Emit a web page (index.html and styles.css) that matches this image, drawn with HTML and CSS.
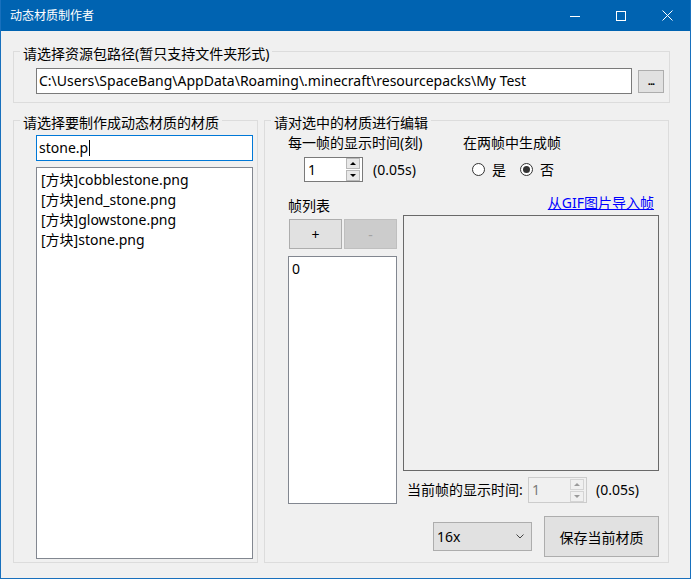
FILE: index.html
```html
<!doctype html>
<html lang="zh-CN">
<head>
	<meta charset="UTF-8">
	<title>动态材质制作者</title>
	<link rel="stylesheet" href="styles.css">
</head>
<body>
	<div class="window">
		<div class="titlebar">
			<span class="title">动态材质制作者</span>
			<div class="caption">
				<span class="cap"><svg width="10" height="10" viewBox="0 0 10 10"><path d="M0 5.5h10" stroke="#fff" stroke-width="1"/></svg></span>
				<span class="cap"><svg width="10" height="10" viewBox="0 0 10 10"><rect x="0.5" y="0.5" width="9" height="9" fill="none" stroke="#fff" stroke-width="1"/></svg></span>
				<span class="cap"><svg width="11" height="11" viewBox="0 0 11 11"><path d="M0.5 0.5l10 10M10.5 0.5l-10 10" stroke="#fff" stroke-width="1"/></svg></span>
			</div>
		</div>

		<div class="client">
			<fieldset class="group group-path">
				<legend>请选择资源包路径(暂只支持文件夹形式)</legend>
				<div class="path-row">
					<div class="textbox path-box">C:\Users\SpaceBang\AppData\Roaming\.minecraft\resourcepacks\My Test</div>
					<button class="btn btn-browse">...</button>
				</div>
			</fieldset>

			<div class="lower">
				<fieldset class="group group-pick">
					<legend>请选择要制作成动态材质的材质</legend>
					<div class="pick-body">
						<div class="textbox search-box focused">stone.p<span class="caret"></span></div>
						<div class="listbox texture-list">
							<div class="item">[方块]cobblestone.png</div>
							<div class="item">[方块]end_stone.png</div>
							<div class="item">[方块]glowstone.png</div>
							<div class="item">[方块]stone.png</div>
						</div>
					</div>
				</fieldset>

				<fieldset class="group group-edit">
					<legend>请对选中的材质进行编辑</legend>
					<div class="edit-body">
						<div class="edit-head">
							<div class="head-time">
								<div class="label">每一帧的显示时间(刻)</div>
								<div class="spin-row">
									<div class="spin">
										<span class="spin-val">1</span>
										<span class="spin-arrows">
											<span class="arrow up"></span>
											<span class="arrow down"></span>
										</span>
									</div>
									<span class="secs">(0.05s)</span>
								</div>
							</div>
							<div class="head-tween">
								<div class="label">在两帧中生成帧</div>
								<div class="radio-row">
									<span class="radio"></span><span class="radio-text">是</span>
									<span class="radio checked"></span><span class="radio-text">否</span>
								</div>
							</div>
						</div>

						<div class="frames">
							<div class="frames-left">
								<div class="label frames-title">帧列表</div>
								<div class="frame-btns">
									<button class="btn btn-small">+</button>
									<button class="btn btn-small disabled">-</button>
								</div>
								<div class="listbox frame-list">
									<div class="item">0</div>
								</div>
							</div>
							<div class="frames-right">
								<div class="gif-link"><a href="#">从GIF图片导入帧</a></div>
								<div class="preview"></div>
								<div class="frame-time">
									<span class="frame-time-label">当前帧的显示时间:</span>
									<div class="spin disabled">
										<span class="spin-val">1</span>
										<span class="spin-arrows">
											<span class="arrow up"></span>
											<span class="arrow down"></span>
										</span>
									</div>
									<span class="secs">(0.05s)</span>
								</div>
								<div class="save-row">
									<div class="combo">
										<span>16x</span>
										<svg width="8" height="5" viewBox="0 0 8 5"><path d="M0.5 0.5l3.5 3.5l3.5-3.5" fill="none" stroke="#444" stroke-width="1"/></svg>
									</div>
									<button class="btn btn-save">保存当前材质</button>
								</div>
							</div>
						</div>
					</div>
				</fieldset>
			</div>
		</div>
	</div>
</body>
</html>
```

FILE: styles.css
```css
html, body {
	margin: 0;
	padding: 0;
	background: #fff;
}

body {
	font-family: "Noto Sans", "Noto Sans CJK SC", sans-serif;
	font-size: 14px;
	color: #000;
}

.window {
	width: 691px;
	height: 579px;
	box-sizing: border-box;
	border: 1px solid #1870bd;
	border-top: 0;
	background: #f0f0f0;
}

/* title bar */
.titlebar {
	height: 31px;
	display: flex;
	align-items: center;
	background: #0063b1;
	color: #fff;
}
.title {
	padding-left: 9px;
	font-size: 12px;
	line-height: 16px;
}
.caption {
	margin-left: auto;
	display: flex;
}
.cap {
	width: 46px;
	height: 31px;
	display: flex;
	align-items: center;
	justify-content: center;
}

/* client */
.client {
	padding: 9px 0 0 12px;
}

.group {
	margin: 0;
	padding: 0;
	min-width: 0;
	box-sizing: border-box;
	border: 1px solid #dcdcdc;
}
.group legend {
	margin-left: 6px;
	padding: 6px 3px 0;
	font-size: 14px;
	line-height: 16px;
}

.textbox {
	box-sizing: border-box;
	background: #fff;
	border: 1px solid #7a7a7a;
	padding-left: 2px;
	line-height: 24px;
	white-space: nowrap;
	overflow: hidden;
}
.textbox.focused {
	border-color: #0078d7;
}
.caret {
	display: inline-block;
	width: 1px;
	height: 16px;
	margin-left: 1px;
	background: #000;
	vertical-align: -3px;
}

.btn {
	box-sizing: border-box;
	margin: 0;
	padding: 0;
	font: inherit;
	color: #000;
	background: #e1e1e1;
	border: 1px solid #adadad;
}
.btn.disabled {
	background: #cccccc;
	border-color: #bfbfbf;
	color: #a3a3a3;
}

.listbox {
	box-sizing: border-box;
	background: #fff;
	border: 1px solid #828790;
	padding: 2px 0 0 4px;
}
.listbox .item {
	line-height: 20px;
	white-space: nowrap;
}

/* path group */
.group-path {
	width: 657px;
}
.path-row {
	display: flex;
	align-items: center;
	gap: 6px;
	padding: 6px 0 8px 22px;
}
.path-box {
	width: 596px;
	height: 26px;
}
.btn-browse {
	width: 26px;
	height: 23px;
	font-size: 11px;
	font-weight: bold;
	line-height: 14px;
	letter-spacing: -1px;
}

/* lower groups */
.lower {
	display: flex;
	gap: 6px;
	margin-top: 6px;
}
.group-pick {
	width: 245px;
	height: 454px;
}
.pick-body {
	padding: 4px 0 0 22px;
}
.search-box {
	width: 217px;
	height: 26px;
}
.texture-list {
	width: 217px;
	height: 392px;
	margin-top: 6px;
}

.group-edit {
	width: 405px;
	height: 454px;
}
.edit-body {
	padding: 4px 9px 0 23px;
}
.label {
	line-height: 16px;
	white-space: nowrap;
}

.edit-head {
	display: flex;
}
.head-time {
	width: 175px;
}
.spin-row {
	display: flex;
	align-items: center;
	margin: 6px 0 0 16px;
}
.spin {
	box-sizing: border-box;
	width: 59px;
	height: 25px;
	display: flex;
	align-items: center;
	background: #fff;
	border: 1px solid #7a7a7a;
}
.spin-val {
	flex: 1;
	padding-left: 3px;
	line-height: 20px;
}
.spin-arrows {
	width: 14px;
	margin-right: 2px;
	display: flex;
	flex-direction: column;
	gap: 1px;
}
.arrow {
	box-sizing: border-box;
	height: 11px;
	display: flex;
	align-items: center;
	justify-content: center;
	background: #e8e8e8;
	border: 1px solid #b8b8b8;
}
.arrow::after {
	content: "";
	border-left: 3px solid transparent;
	border-right: 3px solid transparent;
}
.arrow.up::after {
	border-bottom: 3px solid #000;
}
.arrow.down::after {
	border-top: 3px solid #000;
}
.spin.disabled {
	width: 59px;
	height: 26px;
	background: #f0f0f0;
	border-color: #cccccc;
}
.spin.disabled .spin-val {
	color: #7a7a7a;
}
.spin.disabled .arrow {
	background: #f0f0f0;
	border-color: #d4d4d4;
}
.spin.disabled .arrow.up::after {
	border-bottom-color: #9a9a9a;
}
.spin.disabled .arrow.down::after {
	border-top-color: #9a9a9a;
}
.secs {
	margin-left: 10px;
	line-height: 16px;
}

.radio-row {
	display: flex;
	align-items: center;
	height: 25px;
	margin: 6px 0 0 9px;
}
.radio {
	box-sizing: border-box;
	width: 13px;
	height: 13px;
	border: 1px solid #333;
	border-radius: 50%;
	background: #fff;
	display: flex;
	align-items: center;
	justify-content: center;
}
.radio.checked::after {
	content: "";
	width: 7px;
	height: 7px;
	border-radius: 50%;
	background: #333;
}
.radio-text {
	margin: 0 14px 0 7px;
	line-height: 16px;
}

/* frames area */
.frames {
	display: grid;
	grid-template-columns: 109px 256px;
	column-gap: 6px;
	margin-top: 13px;
}
.frames-title {
	padding-top: 3px;
}
.frame-btns {
	display: flex;
	gap: 2px;
	margin: 5px 0 0 1px;
}
.btn-small {
	width: 53px;
	height: 30px;
	font-size: 14px;
}
.frame-list {
	width: 109px;
	height: 248px;
	margin-top: 7px;
	padding-left: 3px;
}

.gif-link {
	text-align: right;
	padding-right: 5px;
	line-height: 16px;
}
.gif-link a {
	color: #0000ff;
	text-decoration: underline;
}
.preview {
	box-sizing: border-box;
	width: 256px;
	height: 256px;
	margin-top: 4px;
	border: 1px solid #696969;
}
.frame-time {
	display: flex;
	align-items: center;
	margin-top: 6px;
	padding-left: 4px;
}
.frame-time-label {
	width: 121px;
	line-height: 16px;
	white-space: nowrap;
}
.frame-time .secs {
	margin-left: 9px;
}

.save-row {
	display: flex;
	justify-content: flex-end;
	align-items: center;
	gap: 12px;
	margin-top: 13px;
}
.combo {
	box-sizing: border-box;
	width: 99px;
	height: 29px;
	display: flex;
	align-items: center;
	justify-content: space-between;
	padding: 0 7px 0 3px;
	background: #e1e1e1;
	border: 1px solid #adadad;
}
.btn-save {
	width: 115px;
	height: 41px;
}
```
